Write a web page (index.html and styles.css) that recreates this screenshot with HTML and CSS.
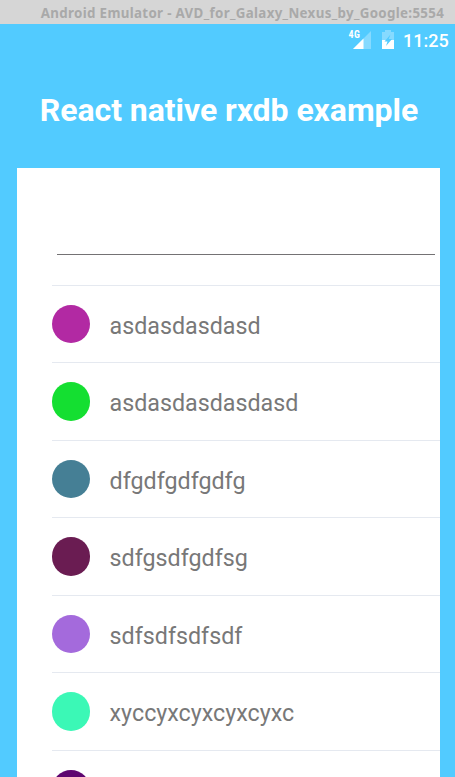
FILE: index.html
```
<!DOCTYPE html>
<html lang="en">
<head>
<meta charset="utf-8">
<title>React native rxdb example</title>
<link rel="stylesheet" href="styles.css">
</head>
<body>
<header class="titlebar"><span>Android Emulator - AVD_for_Galaxy_Nexus_by_Google:5554</span></header>
<div class="statusbar">
  <span class="network">4G</span>
  <svg class="signal" width="18" height="18" viewBox="0 0 18 18"><path d="M18 0V18H0Z" fill="#fff" fill-opacity=".3"/><path d="M10.5 7.5V18H0Z" fill="#fff"/></svg>
  <svg class="battery" width="12" height="19" viewBox="0 0 12 19"><path d="M0 2H3V0H9V2H12V10H0Z" fill="#fff" fill-opacity=".3"/><path d="M0 10H12V19H0Z" fill="#fff"/><path d="M8.5 4.5L2.5 11.5H5.5L4 16L10 9H6.7Z" fill="#52cbff"/></svg>
  <time class="clock">11:25</time>
</div>
<h1 class="heading"><span>React native rxdb example</span></h1>
<main class="card">
  <div class="field"></div>
  <ul class="list">
    <li class="row"><i class="dot magenta"></i><span>asdasdasdasd</span></li>
    <li class="row"><i class="dot green"></i><span>asdasdasdasdasd</span></li>
    <li class="row"><i class="dot teal"></i><span>dfgdfgdfgdfg</span></li>
    <li class="row"><i class="dot plum"></i><span>sdfgsdfgdfsg</span></li>
    <li class="row"><i class="dot violet"></i><span>sdfsdfsdfsdf</span></li>
    <li class="row"><i class="dot mint"></i><span>xyccyxcyxcyxcyxc</span></li>
    <li class="row"><i class="dot purple"></i></li>
  </ul>
</main>
</body>
</html>
```
FILE: styles.css
```
* { box-sizing: border-box; }
body {
  margin: 0;
  height: 777px;
  overflow: hidden;
  display: flex;
  flex-direction: column;
  background: #52cbff;
  font-family: Roboto, sans-serif;
}
.titlebar {
  flex: none;
  height: 24px;
  padding-left: 30px;
  background: #d6d6d6;
  color: #a9a9a9;
  font: bold 13.33px/27px "Noto Sans", sans-serif;
  letter-spacing: .33px;
  text-align: center;
  white-space: nowrap;
}
.statusbar {
  flex: none;
  display: flex;
  height: 32px;
  padding: 6px 6px 0 0;
  justify-content: flex-end;
  color: #fff;
}
.network {
  font: bold 10px/10px "Roboto Condensed", Roboto, sans-serif;
  letter-spacing: .4px;
  margin-right: -7px;
}
.signal { margin: .7px 10.8px 0 0; }
.battery { margin-right: 9px; }
.clock {
  width: 46px;
  font-size: 18px;
  line-height: 22px;
  font-weight: 500;
}
.heading {
  flex: none;
  height: 112px;
  margin: 0;
  padding-left: 3px;
  color: #fff;
  font-size: 32px;
  line-height: 108px;
  font-weight: 700;
  letter-spacing: -.06px;
  text-align: center;
  white-space: nowrap;
}
.card {
  flex: 1;
  min-height: 0;
  overflow: hidden;
  width: 423px;
  margin-left: 17px;
  padding-left: 35px;
  background: #fff;
}
.field {
  height: 87px;
  margin: 0 5px 29.6px;
  border-bottom: 1px solid #747274;
}
.list {
  margin: 0;
  padding: 0;
  list-style: none;
}
.row {
  display: flex;
  align-items: center;
  height: 77.5px;
  border-top: 1px solid #e5e9f0;
  color: #787878;
  font-size: 23.25px;
}
.row span { padding-top: 4.2px; }
.dot {
  width: 38.4px;
  height: 38.4px;
  margin: 0 19.2px 0 0;
  border-radius: 50%;
}
.magenta { background: #b229a3; }
.green { background: #14df31; }
.teal { background: #457f95; }
.plum { background: #6a1c52; }
.violet { background: #a46adc; }
.mint { background: #3bf8b6; }
.purple { background: #5e0670; }
```
